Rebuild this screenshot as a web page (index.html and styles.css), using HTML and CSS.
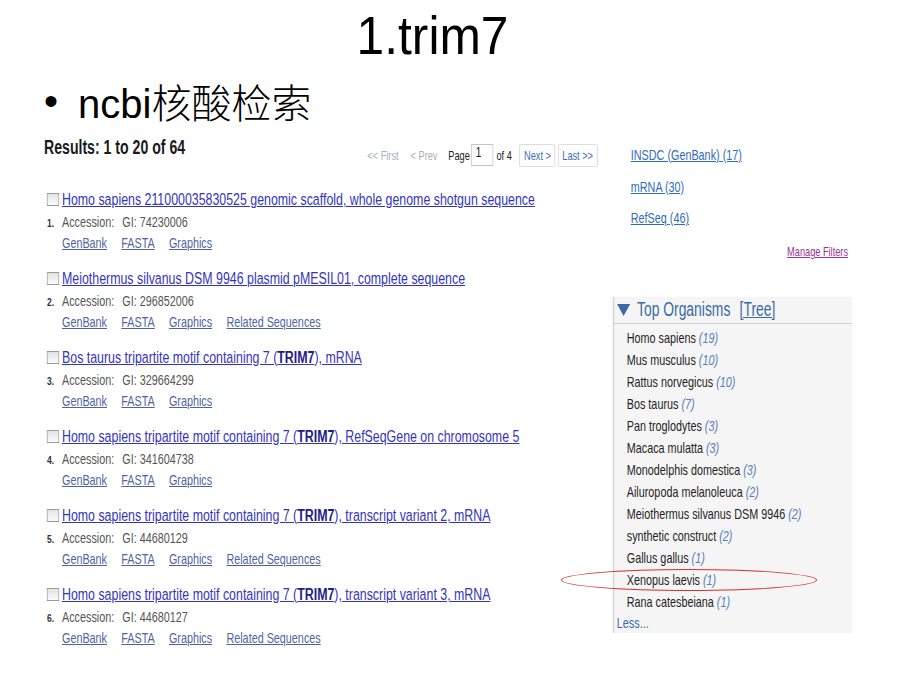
FILE: index.html
```html
<!DOCTYPE html>
<html lang="zh">
<head>
<meta charset="utf-8">
<title>1.trim7</title>
<link rel="stylesheet" href="styles.css">
</head>
<body>
<div class="slide">
  <h1 class="title"><span>1.trim7</span></h1>
  <p class="bullet"><span class="dot">•</span><span>ncbi<span class="cjk">核酸检索</span></span></p>

  <div class="shot">
    <section class="results">
      <div class="res-head">
        <div class="res-count">Results: 1 to 20 of 64</div>
        <div class="pager">
          <span class="pg-dis first">&lt;&lt; First</span>
          <span class="pg-dis">&lt; Prev</span>
          <span class="pg-label">Page</span>
          <span class="pg-input">1</span>
          <span class="pg-label of">of 4</span>
          <span class="pg-btn next">Next &gt;</span>
          <span class="pg-btn last">Last &gt;&gt;</span>
        </div>
      </div>

      <div class="list">
        <div class="item">
          <span class="chk"></span><a class="ttl">Homo sapiens 211000035830525 genomic scaffold, whole genome shotgun sequence</a>
          <span class="num">1.</span><div class="acc">Accession:<span class="gi">GI: 74230006</span></div>
          <span></span><div class="links"><a>GenBank</a><a>FASTA</a><a>Graphics</a></div>
        </div>
        <div class="item">
          <span class="chk"></span><a class="ttl">Meiothermus silvanus DSM 9946 plasmid pMESIL01, complete sequence</a>
          <span class="num">2.</span><div class="acc">Accession:<span class="gi">GI: 296852006</span></div>
          <span></span><div class="links"><a>GenBank</a><a>FASTA</a><a>Graphics</a><a>Related Sequences</a></div>
        </div>
        <div class="item">
          <span class="chk"></span><a class="ttl">Bos taurus tripartite motif containing 7 (<b>TRIM7</b>), mRNA</a>
          <span class="num">3.</span><div class="acc">Accession:<span class="gi">GI: 329664299</span></div>
          <span></span><div class="links"><a>GenBank</a><a>FASTA</a><a>Graphics</a></div>
        </div>
        <div class="item">
          <span class="chk"></span><a class="ttl">Homo sapiens tripartite motif containing 7 (<b>TRIM7</b>), RefSeqGene on chromosome 5</a>
          <span class="num">4.</span><div class="acc">Accession:<span class="gi">GI: 341604738</span></div>
          <span></span><div class="links"><a>GenBank</a><a>FASTA</a><a>Graphics</a></div>
        </div>
        <div class="item">
          <span class="chk"></span><a class="ttl">Homo sapiens tripartite motif containing 7 (<b>TRIM7</b>), transcript variant 2, mRNA</a>
          <span class="num">5.</span><div class="acc">Accession:<span class="gi">GI: 44680129</span></div>
          <span></span><div class="links"><a>GenBank</a><a>FASTA</a><a>Graphics</a><a>Related Sequences</a></div>
        </div>
        <div class="item">
          <span class="chk"></span><a class="ttl">Homo sapiens tripartite motif containing 7 (<b>TRIM7</b>), transcript variant 3, mRNA</a>
          <span class="num">6.</span><div class="acc">Accession:<span class="gi">GI: 44680127</span></div>
          <span></span><div class="links"><a>GenBank</a><a>FASTA</a><a>Graphics</a><a>Related Sequences</a></div>
        </div>
      </div>
    </section>

    <aside class="side">
      <a class="flt">INSDC (GenBank) (17)</a>
      <a class="flt">mRNA (30)</a>
      <a class="flt">RefSeq (46)</a>
      <a class="manage">Manage Filters</a>

      <div class="orgs">
        <div class="org-head">
          <svg class="tri" viewBox="0 0 18 12" width="18" height="12"><path d="M0 0H18L9 12Z" fill="#3b6aa6"/></svg>
          <span>Top Organisms</span>
          <a class="tree">[Tree]</a>
        </div>
        <ul class="org-list">
          <li>Homo sapiens <span class="cnt">(19)</span></li>
          <li>Mus musculus <span class="cnt">(10)</span></li>
          <li>Rattus norvegicus <span class="cnt">(10)</span></li>
          <li>Bos taurus <span class="cnt">(7)</span></li>
          <li>Pan troglodytes <span class="cnt">(3)</span></li>
          <li>Macaca mulatta <span class="cnt">(3)</span></li>
          <li>Monodelphis domestica <span class="cnt">(3)</span></li>
          <li>Ailuropoda melanoleuca <span class="cnt">(2)</span></li>
          <li>Meiothermus silvanus DSM 9946 <span class="cnt">(2)</span></li>
          <li>synthetic construct <span class="cnt">(2)</span></li>
          <li>Gallus gallus <span class="cnt">(1)</span></li>
          <li>Xenopus laevis <span class="cnt">(1)</span></li>
          <li>Rana catesbeiana <span class="cnt">(1)</span></li>
        </ul>
        <a class="less">Less...</a>
      </div>
    </aside>
  </div>
</div>
<div class="mark"></div>
</body>
</html>
```

FILE: styles.css
```css
html, body {
  margin: 0;
  padding: 0;
  width: 920px;
  height: 690px;
  overflow: hidden;
  background: #fff;
}
body {
  position: relative;
  font-family: "Liberation Sans", "Noto Sans CJK SC", Arial, sans-serif;
  color: #000;
}

.title {
  margin: 8px 0 0;
  padding-right: 55px;
  font-size: 54px;
  line-height: 54px;
  font-weight: normal;
  text-align: center;
}
.title span {
  display: inline-block;
  transform: scaleX(0.92);
}

.bullet {
  display: flex;
  height: 40px;
  margin: 19px 0 0;
  padding-left: 44px;
  font-size: 40px;
  line-height: 40px;
}
.bullet .dot {
  width: 34px;
}
.cjk {
  font-family: "Noto Sans CJK SC", sans-serif;
  font-weight: 300;
}

/* embedded screenshot: horizontally condensed */
.shot {
  display: flex;
  width: 1122px;
  margin: 16px 0 0 44px;
  transform: scaleX(0.72);
  transform-origin: 0 0;
}

.results {
  width: 772px;
}
.res-head {
  display: flex;
  justify-content: space-between;
  height: 30px;
}
.res-count {
  font-size: 19.6px;
  line-height: 20px;
  font-weight: bold;
  color: #1a1a1a;
}
.pager {
  display: flex;
  align-items: center;
  height: 23px;
  margin-top: 7px;
  padding-right: 3.2px;
  font-size: 12.8px;
}
.pg-dis {
  color: #a9afba;
}
.pg-dis.first {
  margin-right: 16.7px;
}
.pg-label {
  margin-left: 15px;
  color: #1a1a1a;
}
.pg-label.of {
  margin-left: 4.3px;
}
.pg-input {
  align-self: flex-start;
  box-sizing: border-box;
  width: 30.6px;
  height: 22px;
  margin-left: 2.1px;
  padding-left: 5.3px;
  border: 1px solid #c4c4c4;
  font-size: 13.9px;
  line-height: 15px;
  color: #111;
}
.pg-btn {
  box-sizing: border-box;
  height: 23px;
  padding: 0 5.3px;
  border: 1px solid #d8d8d8;
  border-radius: 2px;
  line-height: 21px;
  color: #3d6cb8;
}
.pg-btn.next {
  margin-left: 10.7px;
}
.pg-btn.last {
  margin-left: 3.2px;
}

.list {
  margin-top: 21px;
}
.item {
  display: grid;
  grid-template-columns: 20.8px 1fr;
  grid-template-rows: 22px 23px 20px;
  align-items: center;
  padding-left: 4.2px;
  margin-bottom: 14px;
}
.chk {
  box-sizing: border-box;
  width: 16.7px;
  height: 13px;
  border: 1px solid #9a9a9a;
  background: linear-gradient(#e4e4e4, #fbfbfb);
}
.ttl {
  font-size: 17.2px;
  line-height: 22px;
  color: #3434c0;
  text-decoration: underline;
  white-space: nowrap;
}
.ttl b {
  color: #1d1d8a;
}
.num {
  align-self: baseline;
  font-size: 11.8px;
  font-weight: bold;
  color: #333;
}
.acc {
  align-self: baseline;
  font-size: 15px;
  line-height: 23px;
  color: #555;
}
.acc .gi {
  margin-left: 11.2px;
}
.links {
  font-size: 15px;
  line-height: 20px;
  white-space: nowrap;
}
.links a {
  margin-right: 19.8px;
  color: #5064a2;
  text-decoration: underline;
}

.side {
  display: flex;
  flex-direction: column;
  align-items: flex-start;
  width: 332px;
  margin-left: 18px;
  padding-top: 8px;
}
.flt {
  margin-left: 25px;
  font-size: 15px;
  line-height: 20px;
  color: #2f6bbf;
  text-decoration: underline;
}
.flt + .flt {
  margin-top: 11.5px;
}
.manage {
  align-self: flex-end;
  margin: 16px 5.3px 0 0;
  font-size: 12.8px;
  line-height: 16px;
  color: #993399;
  text-decoration: underline;
}
.orgs {
  align-self: stretch;
  margin-top: 37px;
  background: #f5f5f5;
  border-left: 2px solid #d6d6d6;
}
.org-head {
  display: flex;
  align-items: center;
  box-sizing: border-box;
  height: 27px;
  padding-left: 3.6px;
  border-bottom: 1px solid #cfcfcf;
  font-size: 19.3px;
  color: #3b6aa6;
}
.tri {
  margin-right: 10px;
}
.tree {
  margin-left: 12.8px;
  text-decoration: underline;
}
.org-list {
  list-style: none;
  margin: 0;
  padding: 3px 0 0 17.4px;
}
.org-list li {
  font-size: 15px;
  line-height: 22px;
  color: #1e1e1e;
  white-space: nowrap;
}
.cnt {
  font-style: italic;
  color: #5a7db5;
}
.less {
  display: block;
  padding-left: 3.6px;
  font-size: 15px;
  line-height: 20px;
  color: #3b6aa6;
}

.mark {
  position: absolute;
  left: 561px;
  top: 569px;
  box-sizing: border-box;
  width: 256px;
  height: 22px;
  border: 1.5px solid #d9302c;
  border-radius: 50%;
}
```
